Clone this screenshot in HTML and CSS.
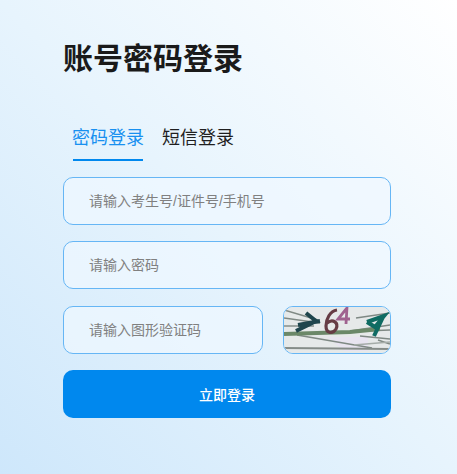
FILE: index.html
```html
<!DOCTYPE html>
<html lang="zh-CN">
<head>
<meta charset="utf-8">
<title>账号密码登录</title>
<link rel="stylesheet" href="styles.css">
</head>
<body>
<main class="panel">
  <h1 class="title">账号密码登录</h1>
  <div class="tabs">
    <div class="tab tab-active">密码登录</div>
    <div class="tab">短信登录</div>
  </div>
  <form class="form">
    <input class="field" type="text" placeholder="请输入考生号/证件号/手机号">
    <input class="field" type="password" placeholder="请输入密码">
    <div class="captcha-row">
      <input class="field field-captcha" type="text" placeholder="请输入图形验证码">
      <div class="captcha">
        <svg viewBox="0 0 106 46" width="106" height="46" aria-hidden="true">
          <rect width="106" height="46" fill="#e6e9e9"/>
          <path d="M44 30L84 30L84 44L60 44Z" fill="#e8e4f0"/>
          <g fill="none" stroke="#7f8984" stroke-width="1.400">
            <path d="M0 3L34 13"/>
            <path d="M0 11L36 16"/>
            <path d="M0 19L30 19"/>
            <path d="M72 11L106 6"/>
            <path d="M66 24L106 18"/>
            <path d="M80 24L106 23"/>
            <path d="M76 29L106 32"/>
            <path d="M94 33L106 37"/>
            <path d="M13 28L88 41"/>
            <path d="M70 38L106 35" stroke="#a5aca8"/>
          </g>
          <path d="M0 41L106 42" fill="none" stroke="#858c88" stroke-width="2.200"/>
          <path d="M0 27L66 25L96 22" fill="none" stroke="#6b8868" stroke-width="4"/>
          <path d="M22 6L32 14L12 24M14 18L36 14" fill="none" stroke="#1f454c" stroke-width="4"/>
          <path d="M53 3C46 4 42 12 42 19C42 27 49 27 52 22C55 16 49 11 43 16" fill="none" stroke="#663c44" stroke-width="3.200"/>
          <path d="M63 1L54 12L66 12M63 0L62 17" fill="none" stroke="#a0628f" stroke-width="2.800"/>
          <path d="M83 15L100 9L91 20L83 15M100 8L90 29" fill="none" stroke="#0f6b62" stroke-width="4"/>
        </svg>
      </div>
    </div>
    <button class="submit" type="button">立即登录</button>
  </form>
</main>
</body>
</html>
```

FILE: styles.css
```css
* {
  box-sizing: border-box;
}

html,
body {
  height: 100%;
}

body {
  margin: 0;
  overflow: hidden;
  font-family: "Liberation Sans", "Noto Sans CJK SC", sans-serif;
  background: linear-gradient(to top right, #cee7fb 0%, #e7f4fd 50%, #ffffff 100%);
}

.panel {
  width: 328px;
  margin-left: 63px;
  padding-top: 37px;
}

.title {
  margin: 0;
  height: 44px;
  font-size: 30px;
  line-height: 44px;
  font-weight: 700;
  color: #1a1a1a;
}

.tabs {
  display: flex;
  gap: 18px;
  margin-top: 32px;
  padding-left: 9px;
}

.tab {
  position: relative;
  width: 72px;
  height: 48px;
  padding-top: 12px;
  font-size: 18px;
  line-height: 26px;
  color: #1f1f1f;
  white-space: nowrap;
}

.tab-active {
  color: #1890f0;
}

.tab-active::after {
  content: "";
  position: absolute;
  left: 1px;
  right: 1px;
  bottom: 0;
  height: 2px;
  background: #0088ee;
}

.form {
  display: flex;
  flex-direction: column;
  gap: 16.33px;
  margin-top: 16px;
}

.field {
  display: block;
  width: 100%;
  height: 48px;
  padding: 0 25px;
  font-family: inherit;
  font-size: 14px;
  color: #333;
  background: rgba(240, 248, 255, 0.7);
  border: 1px solid #66b6f5;
  border-radius: 10px;
  outline: none;
}

.field::placeholder {
  color: #808080;
  opacity: 1;
}

.captcha-row {
  display: flex;
  justify-content: space-between;
}

.field-captcha {
  width: 200px;
}

.captcha {
  width: 108px;
  height: 48px;
  border: 1px solid #66b6f5;
  border-radius: 10px;
  overflow: hidden;
}

.captcha svg {
  display: block;
  filter: blur(0.6px);
}

.submit {
  height: 48px;
  padding: 0;
  font-family: inherit;
  font-size: 14px;
  font-weight: 500;
  color: #fff;
  background: #0088ee;
  border: 0;
  border-radius: 10px;
}
```
